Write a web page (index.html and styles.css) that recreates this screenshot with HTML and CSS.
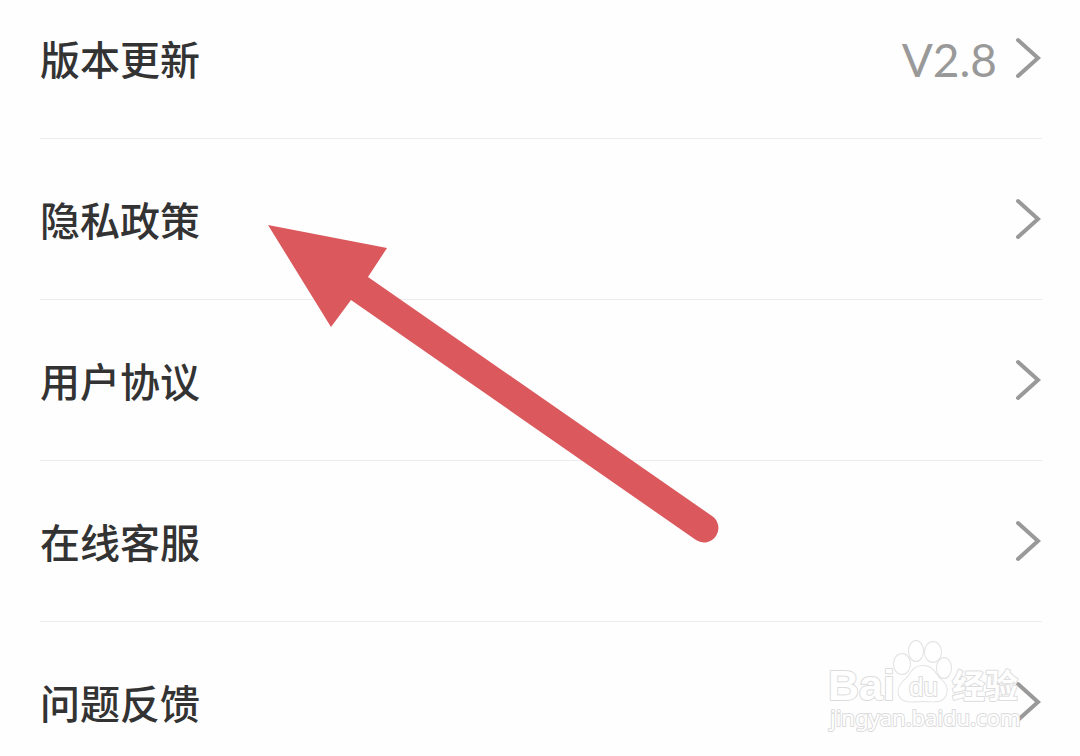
FILE: index.html
```html
<!DOCTYPE html>
<html lang="zh-CN">
<head>
<meta charset="utf-8">
<meta name="viewport" content="width=device-width, initial-scale=1">
<title>设置</title>
<link rel="stylesheet" href="styles.css">
</head>
<body>
<main class="page">
  <nav class="menu">
    <a class="row" href="#update"><span class="label">版本更新</span><span class="value">V2.8</span><svg class="chevron" viewBox="0 0 26 42" aria-hidden="true"><path d="M3 3 L23 21 L3 39"/></svg></a>
    <a class="row" href="#privacy"><span class="label">隐私政策</span><svg class="chevron" viewBox="0 0 26 42" aria-hidden="true"><path d="M3 3 L23 21 L3 39"/></svg></a>
    <a class="row" href="#terms"><span class="label">用户协议</span><svg class="chevron" viewBox="0 0 26 42" aria-hidden="true"><path d="M3 3 L23 21 L3 39"/></svg></a>
    <a class="row" href="#service"><span class="label">在线客服</span><svg class="chevron" viewBox="0 0 26 42" aria-hidden="true"><path d="M3 3 L23 21 L3 39"/></svg></a>
    <a class="row" href="#feedback"><span class="label">问题反馈</span><svg class="chevron" viewBox="0 0 26 42" aria-hidden="true"><path d="M3 3 L23 21 L3 39"/></svg></a>
  </nav>
  <svg class="pointer" viewBox="0 0 452 320" aria-hidden="true">
    <path d="M0 1 L119 24 L100 53 L444 292 A14 14 0 0 1 428 316 L83 76 L63 103 Z"/>
  </svg>
  <svg class="watermark" viewBox="0 0 200 100" role="img" aria-label="Baidu 经验">
    <text class="wm-bai" x="3" y="62">Bai</text>
    <g class="wm-paw">
      <ellipse cx="77" cy="26" rx="8" ry="10"/>
      <ellipse cx="91" cy="13" rx="7" ry="10"/>
      <ellipse cx="108" cy="14" rx="8" ry="10"/>
      <ellipse cx="119" cy="30" rx="7" ry="10"/>
      <path d="M98 28 C108 28 111 37 115 41 C121 46 123 50 121 56 C118 66 108 63 98 63 C89 63 78 66 74 57 C72 50 76 45 81 41 C86 36 88 28 98 28 Z"/>
    </g>
    <text class="wm-du" x="84" y="58">du</text>
    <text class="wm-exp" x="127" y="60">经验</text>
    <text class="wm-url" x="5" y="88">jingyan.baidu.com</text>
  </svg>
</main>
</body>
</html>
```
FILE: styles.css
```css
body {
  margin: 0;
  background: #fefefe;
  color: #333;
  font-family: "Noto Sans CJK SC", sans-serif;
}

.page {
  position: relative;
  overflow: hidden;
}

.menu {
  display: flex;
  flex-direction: column;
  padding: 0 38px 0 40px;
}

.row {
  display: flex;
  align-items: center;
  padding: 50px 0;
  border-bottom: 1px solid #ececec;
  color: inherit;
  text-decoration: none;
}

.row:first-child {
  padding-top: 28px;
}

.row:last-child {
  padding-bottom: 24px;
  border-bottom: 0;
}

.label {
  flex: 1;
  font-size: 40px;
  font-weight: 500;
  line-height: 60px;
}

.value {
  margin-right: 18px;
  padding-top: 4px;
  color: #999;
  font-family: Lato, sans-serif;
  font-size: 46px;
  line-height: 56px;
}

.chevron {
  width: 26px;
  height: 42px;
  margin-right: 1px;
  fill: none;
  stroke: #999;
  stroke-width: 4;
  stroke-linecap: round;
}

.pointer {
  position: absolute;
  top: 224px;
  left: 268px;
  width: 452px;
  height: 320px;
  fill: #db585d;
}

.watermark {
  position: absolute;
  right: 55px;
  bottom: 18px;
  width: 200px;
  height: 100px;
  fill: #fff;
  stroke: #dcdcdc;
  stroke-width: 2;
  stroke-linejoin: round;
  paint-order: stroke;
}

.wm-paw {
  stroke: #e2e2e2;
}

.wm-bai {
  font: bold 43px "Liberation Sans", sans-serif;
}

.wm-du {
  font: 26px "Liberation Sans", sans-serif;
}

.wm-exp {
  font: bold 33px "Noto Sans CJK SC", sans-serif;
}

.wm-url {
  font: 22px "Noto Sans", sans-serif;
}
```
